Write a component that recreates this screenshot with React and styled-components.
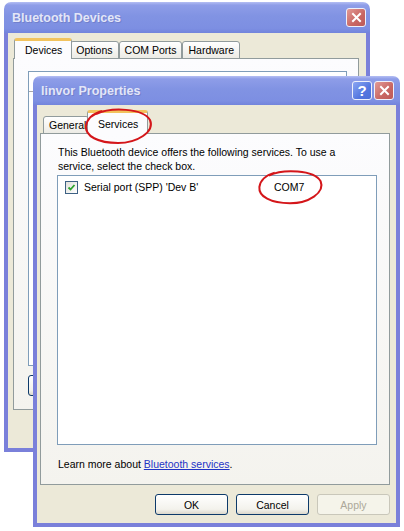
import React from 'react'
import styled, { createGlobalStyle } from 'styled-components'

const GlobalStyle = createGlobalStyle`
  html, body { margin: 0; padding: 0; background: #fff; }
  body {
    font-family: "Liberation Sans", Arial, sans-serif;
    font-size: 10.5px;
    color: #000;
  }
`

const Desktop = styled.div`
  position: relative;
  width: 404px;
  height: 531px;
  overflow: hidden;
  background: #fff;
`

// windows sit on a free desktop, so they are placed by coordinates
const Window = styled.div`
  position: absolute;
  left: ${p => p.$x}px;
  top: ${p => p.$y}px;
  width: ${p => p.$w}px;
  height: ${p => p.$h}px;
  display: flex;
  flex-direction: column;
`

const TitleBar = styled.div`
  flex: none;
  height: ${p => p.$h}px;
  display: flex;
  align-items: center;
  gap: 2px;
  padding: 0 ${p => p.$right}px 0 8px;
  border-radius: 7px 7px 0 0;
  background: linear-gradient(180deg, #b4bef3 0%, #8e9de8 10%, #8193e3 45%, #7d8fe2 85%, #7284dc 100%);
`

const Title = styled.span`
  flex: 1;
  font-weight: bold;
  font-size: 12.5px;
  color: #e3e6f8;
  text-shadow: 1px 1px 0 #7280cc;
  white-space: nowrap;
`

const CaptionButton = styled.div`
  width: 20px;
  height: 19px;
  box-sizing: border-box;
  border: 1px solid #eef0fb;
  border-radius: 3px;
  display: flex;
  align-items: center;
  justify-content: center;
  background: ${p => p.$kind === 'help'
    ? 'linear-gradient(135deg, #8aa6f2, #5577e0 60%, #4d6fd8)'
    : 'linear-gradient(135deg, #e29a96, #c86662 60%, #bd5a58)'};
  color: #fff;
  font-weight: bold;
  font-size: 15px;
`

const Frame = styled.div`
  flex: 1;
  display: flex;
  flex-direction: column;
  border: 4px solid #7a80da;
  border-top: none;
  background: #ece9d8;
  padding: ${p => p.$pad};
`

const TabRow = styled.div`
  position: relative;
  z-index: 1;
  display: flex;
  align-items: flex-end;
  height: ${p => p.$h}px;
  margin-bottom: -1px;
  padding-left: ${p => p.$indent}px;
`

const Tab = styled.div`
  position: relative;
  box-sizing: border-box;
  height: ${p => (p.$active ? p.$h : 18)}px;
  padding: ${p => (p.$active ? '0 9px 0 10px' : '0 5px')};
  margin: 0 ${p => (p.$active ? -2 : 0)}px;
  z-index: ${p => (p.$active ? 2 : 1)};
  display: flex;
  align-items: center;
  white-space: nowrap;
  border: 1px solid #919b9c;
  border-top: ${p => (p.$active ? '3px solid #f2c35e' : '1px solid #919b9c')};
  border-bottom: ${p => (p.$active ? 'none' : '1px solid #919b9c')};
  border-radius: 3px 3px 0 0;
  background: ${p => (p.$active ? '#fcfcfe' : 'linear-gradient(#ffffff, #ecebe5)')};
  overflow: ${p => (p.$clip ? 'hidden' : 'visible')};
  max-width: ${p => (p.$clip ? `${p.$clip}px` : 'none')};
`

const Panel = styled.div`
  flex: 1;
  display: flex;
  flex-direction: column;
  border: 1px solid #919b9c;
  background: linear-gradient(180deg, #fcfcfe, #f4f3ee);
  padding: ${p => p.$pad};
`

const ListBox = styled.div`
  flex: 1;
  background: #fff;
  border: 1px solid #7f9db9;
  display: flex;
  flex-direction: column;
`

const ListHeader = styled.div`
  height: 19px;
  border-bottom: 1px solid #a7a6aa;
  margin-right: 300px;
`

const Description = styled.p`
  margin: 0 0 2px 1px;
  line-height: 14px;
`

const ServiceRow = styled.div`
  display: flex;
  align-items: center;
  height: 14px;
  padding: 4px 7px 0;
`

const CheckBox = styled.span`
  flex: none;
  width: 13px;
  height: 13px;
  box-sizing: border-box;
  border: 1px solid #3d6184;
  background: linear-gradient(135deg, #e0e0da, #ffffff);
  display: flex;
  align-items: center;
  justify-content: center;
  margin-right: 6px;
`

const ServiceName = styled.span`
  width: 190px;
  white-space: nowrap;
`

const PortCell = styled.span`
  position: relative;
  white-space: nowrap;
`

const Mark = styled.svg`
  position: absolute;
  left: 50%;
  top: 50%;
  transform: translate(-50%, -50%);
  margin: ${p => p.$shift};
  overflow: visible;
  pointer-events: none;
`

const LearnMore = styled.p`
  margin: 12px 0 0 1px;
  line-height: 14px;
`

const Link = styled.a`
  color: #1f33c6;
  text-decoration: underline;
`

const ButtonRow = styled.div`
  display: flex;
  justify-content: ${p => p.$align};
  gap: 8px;
  margin-top: ${p => p.$top}px;
`

const Button = styled.button`
  width: 73px;
  height: 21px;
  padding: 0;
  font: inherit;
  border: 1px solid ${p => (p.disabled ? '#c9c7ba' : '#0d3a6a')};
  border-radius: 3px;
  background: ${p => (p.disabled ? '#f5f4ea' : 'linear-gradient(180deg, #ffffff, #f3f2ec 75%, #dcd8cc)')};
  color: ${p => (p.disabled ? '#aca899' : '#000')};
`

function Ellipse({ w, h, shift = '0' }) {
  return (
    <Mark $shift={shift} width={w} height={h} viewBox="0 0 70 36">
      <path
        d="M13 6 C28 -1, 60 0, 67 12 C72 24, 54 35, 35 35 C15 35, 2 28, 3 18 C4 11, 9 6, 19 3"
        fill="none"
        stroke="#d4161a"
        strokeWidth="2"
        vectorEffect="non-scaling-stroke"
      />
    </Mark>
  )
}

function CloseGlyph() {
  return (
    <svg width="11" height="11" viewBox="0 0 11 11">
      <path d="M2 2 L9 9 M9 2 L2 9" stroke="#fff" strokeWidth="2" strokeLinecap="square" />
    </svg>
  )
}

function Check() {
  return (
    <svg width="9" height="9" viewBox="0 0 9 9">
      <path d="M1.5 4.5 L3.5 6.5 L7.5 2" fill="none" stroke="#2ea32e" strokeWidth="1.8" />
    </svg>
  )
}

export default function App() {
  return (
    <>
      <GlobalStyle />
      <Desktop>
        <Window $x={4} $y={2} $w={366} $h={450}>
          <TitleBar $h={31} $right={4}>
            <Title>Bluetooth Devices</Title>
            <CaptionButton><CloseGlyph /></CaptionButton>
          </TitleBar>
          <Frame $pad="5px 7px 38px 5px">
            <TabRow $h={21} $indent={3}>
              <Tab $active $h={21}>Devices</Tab>
              <Tab>Options</Tab>
              <Tab>COM Ports</Tab>
              <Tab>Hardware</Tab>
            </TabRow>
            <Panel $pad="12px 11px 13px 14px">
              <ListBox>
                <ListHeader />
              </ListBox>
              <ButtonRow $align="flex-start" $top={9}>
                <Button>Add...</Button>
              </ButtonRow>
            </Panel>
          </Frame>
        </Window>

        <Window $x={33} $y={76} $w={367} $h={451}>
          <TitleBar $h={29} $right={6}>
            <Title>linvor Properties</Title>
            <CaptionButton $kind="help">?</CaptionButton>
            <CaptionButton><CloseGlyph /></CaptionButton>
          </TitleBar>
          <Frame $pad="5px 6px 8px 3px">
            <TabRow $h={24} $indent={3}>
              <Tab $clip={46}>General</Tab>
              <Tab $active $h={24}>
                Services
                <Ellipse w={70} h={36} shift="2px 0 0 0" />
              </Tab>
            </TabRow>
            <Panel $pad="11px 12px 13px 16px">
              <Description>
                This Bluetooth device offers the following services. To use a
                <br />
                service, select the check box.
              </Description>
              <ListBox>
                <ServiceRow>
                  <CheckBox><Check /></CheckBox>
                  <ServiceName>Serial port (SPP) 'Dev B'</ServiceName>
                  <PortCell>
                    COM7
                    <Ellipse w={67} h={35} shift="0 0 0 1px" />
                  </PortCell>
                </ServiceRow>
              </ListBox>
              <LearnMore>
                Learn more about <Link>Bluetooth services</Link>.
              </LearnMore>
            </Panel>
            <ButtonRow $align="flex-end" $top={9}>
              <Button>OK</Button>
              <Button>Cancel</Button>
              <Button disabled>Apply</Button>
            </ButtonRow>
          </Frame>
        </Window>
      </Desktop>
    </>
  )
}
